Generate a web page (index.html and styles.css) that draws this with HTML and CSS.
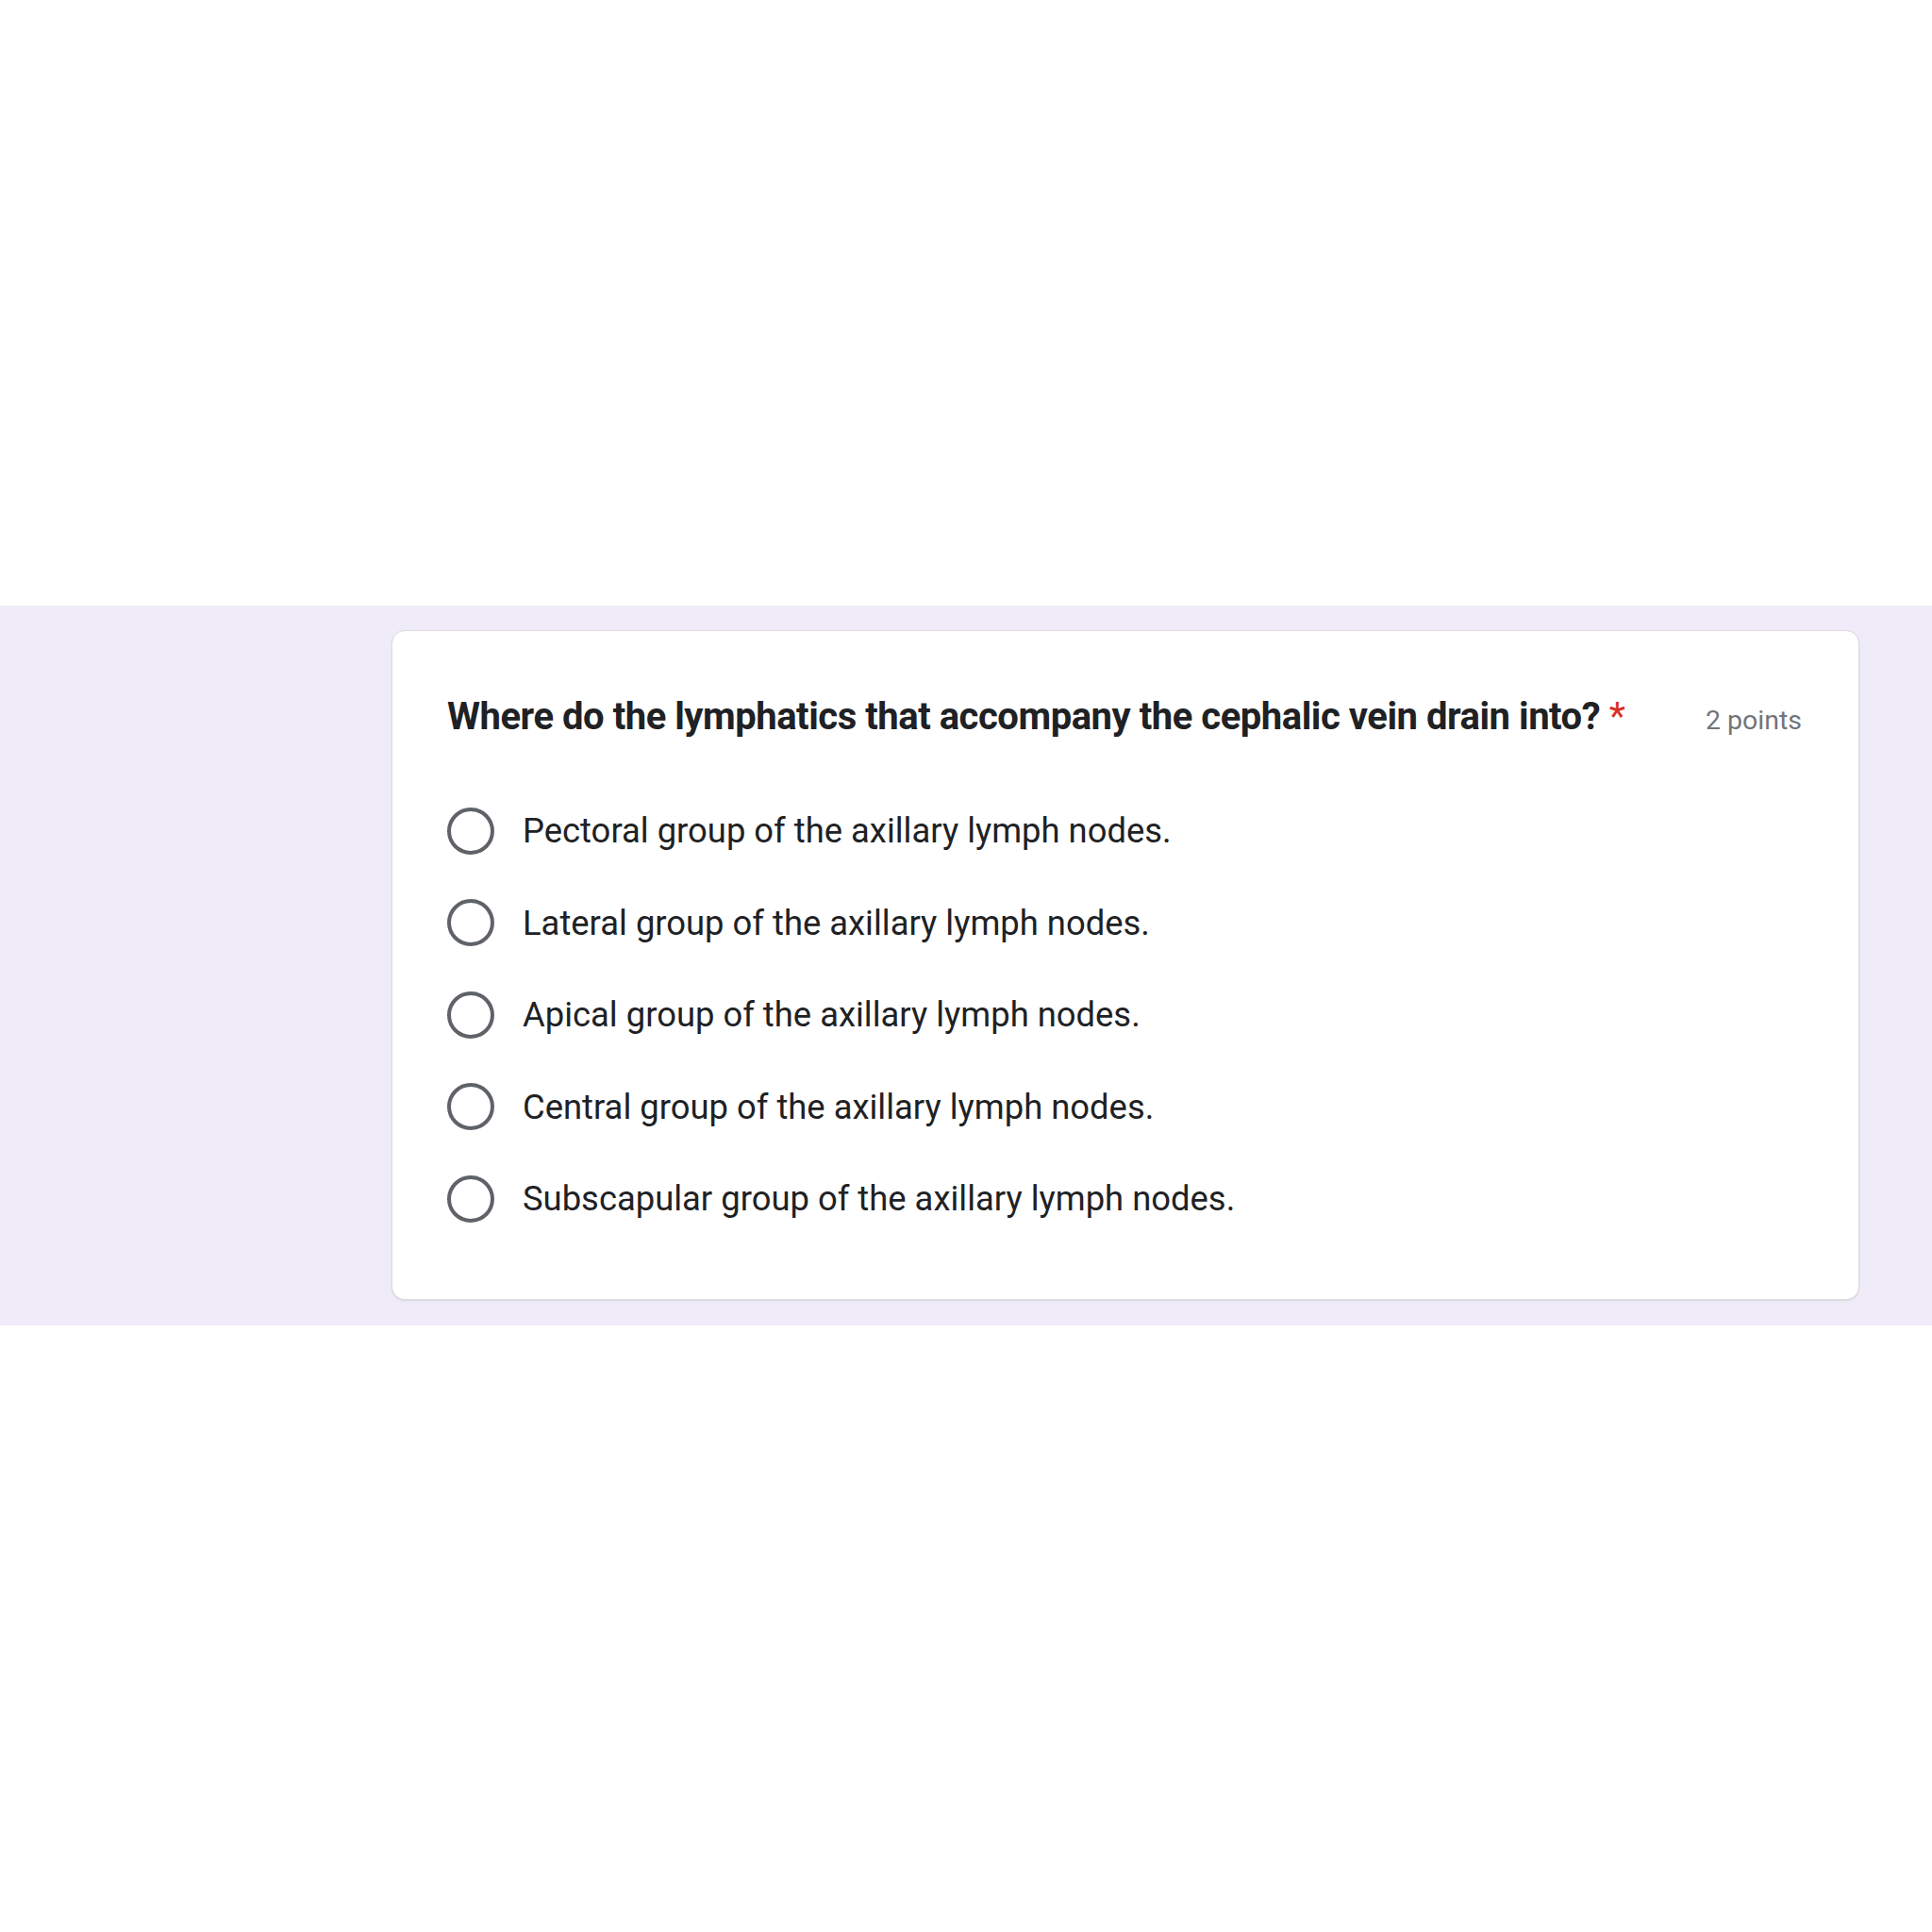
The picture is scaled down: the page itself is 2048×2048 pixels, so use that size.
FILE: index.html
```html
<!DOCTYPE html>
<html>
<head>
<meta charset="utf-8">
<link rel="stylesheet" href="styles.css">
</head>
<body>
<div class="band">
  <div class="card">
    <div class="header">
      <div class="title">Where do the lymphatics that accompany the cephalic vein drain into? <span class="req">*</span></div>
      <div class="points">2 points</div>
    </div>
    <div class="options">
      <label class="option"><span class="radio"></span><span class="label">Pectoral group of the axillary lymph nodes.</span></label>
      <label class="option"><span class="radio"></span><span class="label">Lateral group of the axillary lymph nodes.</span></label>
      <label class="option"><span class="radio"></span><span class="label">Apical group of the axillary lymph nodes.</span></label>
      <label class="option"><span class="radio"></span><span class="label">Central group of the axillary lymph nodes.</span></label>
      <label class="option"><span class="radio"></span><span class="label">Subscapular group of the axillary lymph nodes.</span></label>
    </div>
  </div>
</div>
</body>
</html>
```
FILE: styles.css
```css
html, body {
  margin: 0;
  padding: 0;
  background: #ffffff;
  font-family: Roboto, "Noto Sans", Arial, sans-serif;
}
.band {
  margin-top: 642px;
  background: #f0ebf8;
  padding: 26px 0 27px 415px;
}
.card {
  box-sizing: border-box;
  width: 1556px;
  background: #ffffff;
  border: 1px solid #dadce0;
  border-radius: 14px;
  box-shadow: 0 1px 2px rgba(60, 64, 67, 0.12);
  padding: 67px 60px 57px 58px;
}
.header {
  display: flex;
  align-items: baseline;
  height: 48px;
}
.title {
  font-size: 40px;
  line-height: 48px;
  font-weight: 700;
  color: #202124;
  letter-spacing: -0.47px;
}
.req {
  color: #d93025;
  font-weight: 400;
}
.points {
  margin-left: auto;
  font-size: 28.5px;
  line-height: 48px;
  color: #70757a;
}
.options {
  margin-top: 48px;
  display: flex;
  flex-direction: column;
}
.option {
  display: flex;
  align-items: center;
  height: 97.5px;
}
.radio {
  box-sizing: border-box;
  width: 50px;
  height: 50px;
  border: 4px solid #5f6368;
  border-radius: 50%;
  flex: none;
}
.label {
  margin-left: 30px;
  font-size: 36.4px;
  color: #202124;
}
```
